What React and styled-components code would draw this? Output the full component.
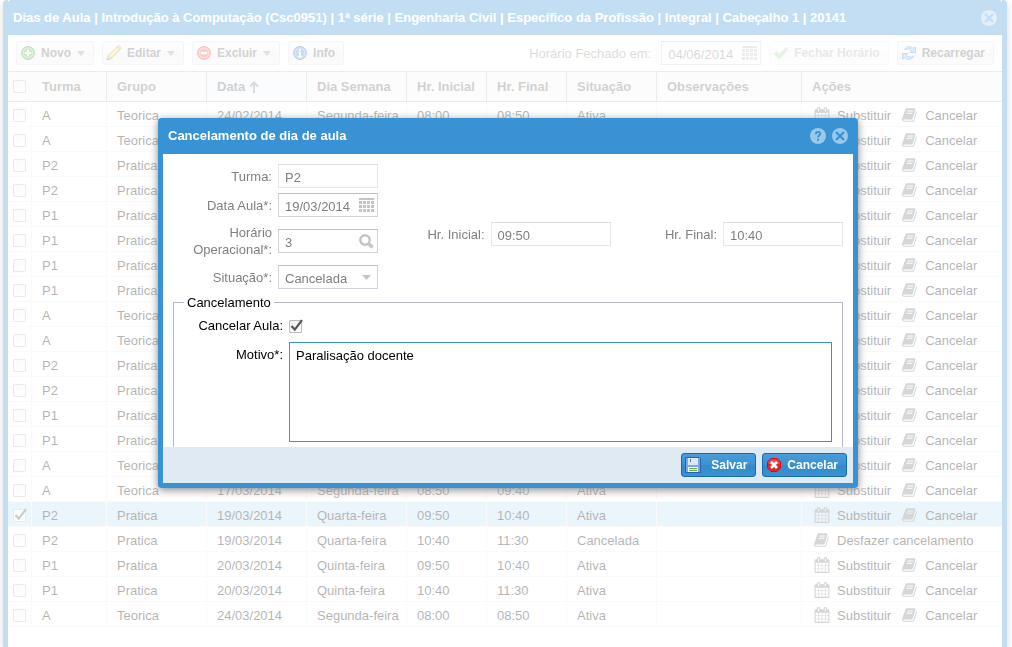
import React from 'react'
import styled, { createGlobalStyle, css } from 'styled-components'

const GlobalStyle = createGlobalStyle`
    * {
        box-sizing: border-box;
    }
    body {
        margin: 0;
        overflow: hidden;
        background: #fff;
        font-family: 'Liberation Sans', Arial, Helvetica, sans-serif;
        font-size: 13px;
        color: #000;
    }
    button, input, select, textarea {
        font-family: inherit;
        font-size: 13px;
    }
    svg {
        display: block;
        flex-shrink: 0;
    }
`

/* windows */

const Page = styled.div`
    padding: 0 5px 0 3px;
`

const MainWindow = styled.main`
    min-height: 100vh;
    border: 5px solid #3892d3;
    border-width: 0 5px;
    border-radius: 4px 4px 0 0;
    background: #fff;
    box-shadow: 0 2px 8px #888;
`

const WindowHeader = styled.header`
    display: flex;
    align-items: center;
    gap: 6px;
    height: ${(props) => (props.$tall ? 36 : 35)}px;
    padding: 0 5px;
    border-radius: 3px 3px 0 0;
    background: #3892d3;
`

const WindowTitle = styled.h1`
    flex: 1;
    margin: 0;
    font-size: 13px;
    line-height: 16px;
    color: #fff;
    white-space: nowrap;
`

const ToolButton = styled.button`
    width: 16px;
    height: 16px;
    padding: 0;
    border: 0;
    background: none;
    cursor: pointer;
`

const Mask = styled.div`
    position: fixed;
    inset: 0;
    display: flex;
    justify-content: center;
    align-items: flex-start;
    padding: 118px 0 0 4px;
    background: rgba(255, 255, 255, 0.7);
`

const Dialog = styled.section`
    width: 700px;
    max-width: 100%;
    border: 5px solid #3892d3;
    border-top: 0;
    border-radius: 4px;
    background: #3892d3;
    box-shadow: 0 2px 8px #888;
`

/* toolbar */

const Toolbar = styled.div`
    display: flex;
    align-items: center;
    gap: 8px;
    height: 36px;
    padding: 0 8px;
`

const Spacer = styled.span`
    flex: 1;
`

const buttonBase = css`
    display: flex;
    align-items: center;
    height: 24px;
    border-radius: 3px;
    font-size: 12px;
    font-weight: bold;
    white-space: nowrap;
    cursor: pointer;
`

const ToolbarButton = styled.button`
    ${buttonBase}
    gap: 5px;
    padding: 0 8px 0 3px;
    border: 1px solid #dcdcdc;
    background: linear-gradient(#f9f9f9, #f4f4f4 50%, #ececec 51%, #f2f2f2);
    color: #666;

    &:disabled {
        opacity: 0.5;
    }
`

const MenuArrow = styled.span`
    margin-left: 1px;
    border: 4px solid transparent;
    border-top: 5px solid #999;
    border-bottom: 0;
`

const ToolbarLabel = styled.label`
    margin-right: 2px;
    color: #888;
`

/* grid */

const Table = styled.table`
    width: 100%;
    table-layout: fixed;
    border-collapse: separate;
    border-spacing: 0;
`

const HeadCell = styled.th`
    height: 31px;
    padding: 0 10px;
    border-top: 1px solid #c0c0c0;
    border-bottom: 1px solid #c0c0c0;
    border-right: ${(props) => (props.$last ? 0 : '1px solid #c0c0c0')};
    background: ${(props) => (props.$sorted ? '#eef5fb' : '#f5f5f5')};
    color: #666;
    text-align: left;
    white-space: nowrap;
`

const CheckHeadCell = styled(HeadCell)`
    padding: 0 5px;
    border-right: 0;
`

const HeadContent = styled.span`
    display: flex;
    align-items: center;
    gap: 4px;
`

const Cell = styled.td`
    height: 25px;
    padding: 2px 10px 0;
    border-bottom: 1px solid #ededed;
    border-right: 1px solid #ededed;
    white-space: nowrap;
    overflow: hidden;
`

const CheckCell = styled(Cell)`
    padding: 2px 5px 0;
`

const ActionCell = styled(Cell)`
    padding: 2px 0 0 12px;
    border-right: 0;
`

const Row = styled.tr`
    background: ${(props) => (props.$selected ? '#bcdcf3' : '#fff')};
`

const Actions = styled.div`
    display: flex;
    align-items: center;
    gap: 11px;
`

const ActionLink = styled.a`
    display: flex;
    align-items: center;
    gap: 7px;
    color: #000;
    text-decoration: none;

    svg {
        color: #777;
    }
`

const CheckWrap = styled.span`
    position: relative;
    display: block;
    width: 13px;
    height: 13px;

    svg {
        position: absolute;
        left: 0;
        bottom: 0;
        pointer-events: none;
    }
`

const CheckInput = styled.input`
    appearance: none;
    display: block;
    width: 13px;
    height: 13px;
    margin: 0;
    border: 1px solid #bbb;
    border-radius: 1px;
    background: linear-gradient(135deg, #eee, #fff);
`

/* form */

const FormBody = styled.div`
    height: 293px;
    padding: 10px;
    background: #fff;
    overflow: hidden;
`

const FieldGrid = styled.div`
    display: grid;
    grid-template-columns: 205px 1fr 1fr;
    row-gap: 5px;
    margin-bottom: 5px;
`

const Field = styled.div`
    display: flex;
    align-items: ${(props) => (props.$top ? 'flex-start' : 'center')};
    grid-column-start: ${(props) => props.$column || 1};
    min-height: ${(props) => (props.$double ? 38 : 24)}px;
    gap: 6px;
`

const FieldLabel = styled.label`
    flex: 1;
    line-height: ${(props) => (props.$centered ? 26 : 17)}px;
    color: #7f7f7f;
    text-align: right;
`

const FieldBox = styled.span`
    position: relative;
    display: block;
    width: ${(props) => props.$width || 100}px;

    svg {
        position: absolute;
        top: 5px;
        right: 3px;
        pointer-events: none;
    }
`

const fieldStyle = css`
    display: block;
    width: 100%;
    height: 24px;
    margin: 0;
    padding: 2px 6px 0;
    border: 1px solid ${(props) => (props.$plain ? '#e7e7e7' : '#d4d4d4')};
    border-top-color: ${(props) => (props.$plain ? '#dfdfdf' : '#c0c0c0')};
    border-radius: 0;
    background: #fff;
    color: #7f7f7f;
    opacity: 1;
    outline: 0;
`

const TextInput = styled.input`
    ${fieldStyle}
`

const Select = styled.select`
    ${fieldStyle}
    appearance: none;
`

const Fieldset = styled.fieldset`
    height: 170px;
    margin: 0;
    padding: 2px 10px 10px;
    border: 1px solid #b5b8c8;
`

const Legend = styled.legend`
    padding: 0 3px;
    line-height: 17px;
`

const FieldsetRow = styled.div`
    display: flex;
    align-items: ${(props) => (props.$top ? 'flex-start' : 'center')};
    gap: 6px;
    margin-bottom: 3px;
`

const FieldsetLabel = styled.label`
    width: 99px;
    line-height: 26px;
    text-align: right;
`

const TextArea = styled.textarea`
    flex: 1;
    height: 100px;
    padding: 4px 6px;
    border: 1px solid #3892d3;
    line-height: 17px;
    color: #000;
    outline: 0;
    resize: none;
`

const DialogFooter = styled.footer`
    display: flex;
    justify-content: flex-end;
    gap: 6px;
    padding: 6px;
    background: #dfeaf2;
`

const PrimaryButton = styled.button`
    ${buttonBase}
    gap: ${(props) => props.$gap}px;
    padding: 0 8px 0 3px;
    border: 1px solid #126daf;
    background: linear-gradient(#4b9cd7, #3892d3 50%, #358ac8 51%, #3892d3);
    color: #fff;
`

/* icons */

const CircleIcon = ({ light, dark, children }) => (
    <svg width="16" height="16" viewBox="0 0 16 16">
        <circle cx="8" cy="8" r="6.5" fill={light} stroke={dark} />
        <circle cx="8" cy="8" r="5" fill="none" stroke="#fff" strokeOpacity="0.45" />
        {children}
    </svg>
)

const AddIcon = () => (
    <CircleIcon light="#5cb849" dark="#3a8f32">
        <path d="M8 4.8v6.4M4.8 8h6.4" stroke="#fff" strokeWidth="2" />
    </CircleIcon>
)

const DeleteIcon = () => (
    <CircleIcon light="#f0594c" dark="#d23a30">
        <path d="M4.8 8h6.4" stroke="#fff" strokeWidth="2.4" />
    </CircleIcon>
)

const InfoIcon = () => (
    <CircleIcon light="#4f86c6" dark="#2f5f9f">
        <path d="M8 4v2M6.5 7.5H8v4M6.3 11.5h3.4" stroke="#fff" strokeWidth="1.6" fill="none" />
    </CircleIcon>
)

const PencilIcon = () => (
    <svg width="16" height="16" viewBox="0 0 16 16">
        <path d="M1.2 14.8l1.3-4.2L11 2l3 3-8.5 8.5z" fill="#f7cf4c" stroke="#b8862c" strokeWidth="0.9" />
        <path d="M3.6 11.6l8.4-8.4" stroke="#fff1a8" strokeWidth="1.4" />
        <path d="M10.8 2.1L12.2.8q.6-.4 1.2 0l1.8 1.8q.4.6 0 1.2L13.8 5.2z" fill="#f3b3a0" stroke="#b87a5c" strokeWidth="0.7" />
        <path d="M1.2 14.8l1.3-4.2 2.9 2.9z" fill="#ecd2a4" stroke="#9c7340" strokeWidth="0.6" />
        <path d="M1.2 14.8l.6-1.8 1.2 1.2z" fill="#333" />
    </svg>
)

const TickIcon = () => (
    <svg width="16" height="16" viewBox="0 0 16 16">
        <path d="M1 9l2.6-2.3 2.7 2.7L13 2.5l2 2.1-8.7 9.4z" fill="#5cad4a" stroke="#3f8c35" strokeWidth="0.6" />
    </svg>
)

const RefreshIcon = () => (
    <svg width="16" height="16" viewBox="0 0 16 16">
        <g fill="#8cc4f2" stroke="#2f7ac6" strokeWidth="0.8" strokeLinejoin="round">
            <path d="M3.5 4.5C5.500 1 10 .8 12.300 3.300L14.500 2v5.500H9l1.800-1.800C9.500 4.200 7.200 3.500 3.500 4.500z" />
            <path d="M12.500 11.500C10.500 15 6 15.200 3.700 12.700L1.500 14V8.500H7l-1.800 1.800c1.300 1.500 3.600 2.200 7.300 1.200z" />
        </g>
    </svg>
)

const CalendarIcon = () => (
    <svg width="16" height="16" viewBox="0 0 1792 1792" fill="currentColor">
        <path d="M192 1664h288v-288h-288v288zm352 0h320v-288h-320v288zm-352-352h288v-320h-288v320zm352 0h320v-320h-320v320zm-352-384h288v-288h-288v288zm736 736h320v-288h-320v288zm-384-736h320v-288h-320v288zm768 736h288v-288h-288v288zm-384-352h320v-320h-320v320zm-352-864v-288q0-13-9.5-22.5t-22.5-9.5h-64q-13 0-22.5 9.5t-9.5 22.5v288q0 13 9.5 22.5t22.5 9.5h64q13 0 22.5-9.5t9.5-22.5zm736 864h288v-320h-288v320zm-384-384h320v-288h-320v288zm384 0h288v-288h-288v288zm32-480v-288q0-13-9.5-22.5t-22.5-9.5h-64q-13 0-22.5 9.5t-9.5 22.5v288q0 13 9.5 22.5t22.5 9.5h64q13 0 22.5-9.5t9.5-22.5zm384-64v1280q0 52-38 90t-90 38h-1408q-52 0-90-38t-38-90v-1280q0-52 38-90t90-38h128v-96q0-66 47-113t113-47h64q66 0 113 47t47 113v96h384v-96q0-66 47-113t113-47h64q66 0 113 47t47 113v96h128q52 0 90 38t38 90z" />
    </svg>
)

const BookIcon = () => (
    <svg width="16" height="16" viewBox="0 0 1792 1792" fill="currentColor">
        <path d="M1639 478q40 57 18 129l-275 906q-19 64-76.5 107.5t-122.5 43.5h-923q-77 0-148.5-53.5t-99.5-131.5q-24-67-2-127 0-4 3-27t4-37q1-8-3-21.5t-3-19.5q2-11 8-21t16.5-23.5 16.5-23.5q23-38 45-91.5t30-91.5q3-10 .5-30t-.5-28q3-11 17-28t17-23q21-36 42-92t25-90q1-9-2.5-32t.5-28q4-13 22-30.5t22-22.5q19-26 42.5-84.5t27.5-96.5q1-8-3-25.5t-2-26.5q2-8 9-18t18-23 17-21q8-12 16.5-30.5t15-35 16-36 19.5-32 26.5-23.5 36-11.5 47.5 5.5l-1 3q38-9 51-9h761q74 0 114 56t18 130l-274 906q-36 119-71.5 153.5t-128.5 34.5h-869q-27 0-38 15-11 16-1 43 24 70 144 70h923q29 0 56-15.5t35-41.5l300-987q7-22 5-57 38 15 59 43zm-1064 2q-4 13 2 22.5t20 9.5h608q13 0 25.5-9.5t16.5-22.5l21-64q4-13-2-22.5t-20-9.5h-608q-13 0-25.5 9.5t-16.5 22.5zm-83 256q-4 13 2 22.5t20 9.5h608q13 0 25.5-9.5t16.5-22.5l21-64q4-13-2-22.5t-20-9.5h-608q-13 0-25.5 9.5t-16.5 22.5z" />
    </svg>
)

const SortIcon = () => (
    <svg width="10" height="12" viewBox="0 0 10 12">
        <path d="M5 12V1.5M1 5.5l4-4 4 4" stroke="#888" strokeWidth="2" fill="none" />
    </svg>
)

const CheckMark = () => (
    <svg width="15" height="15" viewBox="0 0 15 15">
        <path d="M2.5 8l3.3 3.6L13 2.2" stroke="#555" strokeWidth="2.2" fill="none" />
    </svg>
)

const DateTriggerIcon = () => (
    <svg width="16" height="16" viewBox="0 0 16 16" fill="#c4c4c4" shapeRendering="crispEdges">
        <rect width="15" height="2" />
        {[3, 7, 11].map((y) =>
            [0, 4, 8, 12].map((x) => <rect key={`${x}-${y}`} x={x} y={y} width="3" height="3" />)
        )}
    </svg>
)

const SearchTriggerIcon = () => (
    <svg width="16" height="16" viewBox="0 0 16 16">
        <circle cx="6" cy="6" r="4.7" stroke="#c4c4c4" strokeWidth="2.4" fill="none" />
        <path d="M9.5 9.5l4 4" stroke="#c4c4c4" strokeWidth="3.4" />
    </svg>
)

const SelectTriggerIcon = () => (
    <svg width="16" height="16" viewBox="0 0 16 16">
        <path d="M3 5h9L7.500 10z" fill="#c4c4c4" />
    </svg>
)

const CloseIcon = () => (
    <svg width="16" height="16" viewBox="0 0 16 16">
        <circle cx="8" cy="8" r="8" fill="#9bc8e9" />
        <path d="M4 4l8 8M12 4l-8 8" stroke="#3892d3" strokeWidth="2.2" />
    </svg>
)

const HelpIcon = () => (
    <svg width="16" height="16" viewBox="0 0 16 16">
        <circle cx="8" cy="8" r="8" fill="#9bc8e9" />
        <path d="M5.8 6.3C5.8 3 10.3 3.3 10.2 5.8 10.2 7.3 8 7.4 8 9.6" stroke="#3892d3" strokeWidth="1.9" fill="none" />
        <rect x="7" y="10.8" width="2" height="2" fill="#3892d3" />
    </svg>
)

const SaveIcon = () => (
    <svg width="16" height="16" viewBox="0 0 16 16">
        <path d="M.5.5h14l1 1v14H.5z" fill="#7ba6e6" stroke="#2f5fae" />
        <rect x="3" y="1" width="10" height="7" fill="#dce8fa" />
        <rect x="5" y="2" width="1" height="3" fill="#4b74bb" />
        <rect x="3" y="10" width="10" height="5" fill="#f4f8f2" />
        <path d="M4 11.5h8M4 13.5h8" stroke="#6cb04a" />
    </svg>
)

const CancelIcon = () => (
    <svg width="16" height="16" viewBox="0 0 16 16">
        <path d="M5 1.5h6L14.500 5v6L11 14.500H5L1.500 11V5z" fill="#e8232b" stroke="#e3060f" />
        <path d="M5.200 2.500h5.600L13.500 5.200V7h-11V5.200z" fill="#f4686c" fillOpacity="0.6" />
        <path d="M5 5l6 6M11 5l-6 6" stroke="#fff" strokeWidth="2.6" />
    </svg>
)

/* data */

const columns = [
    { name: 'Turma', width: 75 },
    { name: 'Grupo', width: 100 },
    { name: 'Data', width: 100, sorted: true },
    { name: 'Dia Semana', width: 100 },
    { name: 'Hr. Inicial', width: 80 },
    { name: 'Hr. Final', width: 80 },
    { name: 'Situação', width: 90 },
    { name: 'Observações', width: 145 },
    { name: 'Ações' },
]

const lessons = [
    ['A', '24/02/2014', 'Segunda-feira', '08:00', '08:50'],
    ['A', '24/02/2014', 'Segunda-feira', '08:50', '09:40'],
    ['P2', '26/02/2014', 'Quarta-feira', '09:50', '10:40'],
    ['P2', '26/02/2014', 'Quarta-feira', '10:40', '11:30'],
    ['P1', '27/02/2014', 'Quinta-feira', '09:50', '10:40'],
    ['P1', '27/02/2014', 'Quinta-feira', '10:40', '11:30'],
    ['P1', '06/03/2014', 'Quinta-feira', '09:50', '10:40'],
    ['P1', '06/03/2014', 'Quinta-feira', '10:40', '11:30'],
    ['A', '10/03/2014', 'Segunda-feira', '08:00', '08:50'],
    ['A', '10/03/2014', 'Segunda-feira', '08:50', '09:40'],
    ['P2', '12/03/2014', 'Quarta-feira', '09:50', '10:40'],
    ['P2', '12/03/2014', 'Quarta-feira', '10:40', '11:30'],
    ['P1', '13/03/2014', 'Quinta-feira', '09:50', '10:40'],
    ['P1', '13/03/2014', 'Quinta-feira', '10:40', '11:30'],
    ['A', '17/03/2014', 'Segunda-feira', '08:00', '08:50'],
    ['A', '17/03/2014', 'Segunda-feira', '08:50', '09:40'],
    ['P2', '19/03/2014', 'Quarta-feira', '09:50', '10:40'],
    ['P2', '19/03/2014', 'Quarta-feira', '10:40', '11:30', 'Cancelada'],
    ['P1', '20/03/2014', 'Quinta-feira', '09:50', '10:40'],
    ['P1', '20/03/2014', 'Quinta-feira', '10:40', '11:30'],
    ['A', '24/03/2014', 'Segunda-feira', '08:00', '08:50'],
]

const SELECTED = 16

const Checkbox = ({ checked, ...rest }) => (
    <CheckWrap>
        <CheckInput type="checkbox" checked={checked} readOnly {...rest} />
        {checked && <CheckMark />}
    </CheckWrap>
)

const LessonRow = ({ lesson, selected }) => {
    const [turma, data, dia, inicio, fim, situacao = 'Ativa'] = lesson
    return (
        <Row $selected={selected}>
            <CheckCell>
                <Checkbox checked={selected} aria-label="Selecionar" />
            </CheckCell>
            <Cell>{turma}</Cell>
            <Cell>{turma === 'A' ? 'Teorica' : 'Pratica'}</Cell>
            <Cell>{data}</Cell>
            <Cell>{dia}</Cell>
            <Cell>{inicio}</Cell>
            <Cell>{fim}</Cell>
            <Cell>{situacao}</Cell>
            <Cell />
            <ActionCell>
                {situacao === 'Cancelada' ? (
                    <Actions>
                        <ActionLink href="#desfazer">
                            <BookIcon />
                            Desfazer cancelamento
                        </ActionLink>
                    </Actions>
                ) : (
                    <Actions>
                        <ActionLink href="#substituir">
                            <CalendarIcon />
                            Substituir
                        </ActionLink>
                        <ActionLink href="#cancelar">
                            <BookIcon />
                            Cancelar
                        </ActionLink>
                    </Actions>
                )}
            </ActionCell>
        </Row>
    )
}

const LessonTable = () => (
    <Table>
        <colgroup>
            <col width="24" />
            {columns.map((column) => (
                <col key={column.name} width={column.width} />
            ))}
        </colgroup>
        <thead>
            <tr>
                <CheckHeadCell>
                    <Checkbox checked={false} aria-label="Selecionar todos" />
                </CheckHeadCell>
                {columns.map((column) => (
                    <HeadCell key={column.name} $sorted={column.sorted} $last={!column.width}>
                        <HeadContent>
                            {column.name}
                            {column.sorted && <SortIcon />}
                        </HeadContent>
                    </HeadCell>
                ))}
            </tr>
        </thead>
        <tbody>
            {lessons.map((lesson, index) => (
                <LessonRow key={index} lesson={lesson} selected={index === SELECTED} />
            ))}
        </tbody>
    </Table>
)

const MainToolbar = () => (
    <Toolbar>
        <ToolbarButton><AddIcon />Novo<MenuArrow /></ToolbarButton>
        <ToolbarButton><PencilIcon />Editar<MenuArrow /></ToolbarButton>
        <ToolbarButton><DeleteIcon />Excluir<MenuArrow /></ToolbarButton>
        <ToolbarButton><InfoIcon />Info</ToolbarButton>
        <Spacer />
        <ToolbarLabel htmlFor="fechado">Horário Fechado em:</ToolbarLabel>
        <FieldBox>
            <TextInput id="fechado" defaultValue="04/06/2014" disabled />
            <DateTriggerIcon />
        </FieldBox>
        <ToolbarButton disabled><TickIcon />Fechar Horário</ToolbarButton>
        <ToolbarButton><RefreshIcon />Recarregar</ToolbarButton>
    </Toolbar>
)

const CancelDialog = () => (
    <Dialog role="dialog" aria-labelledby="dialog-title">
        <WindowHeader $tall>
            <WindowTitle as="h2" id="dialog-title">Cancelamento de dia de aula</WindowTitle>
            <ToolButton aria-label="Ajuda"><HelpIcon /></ToolButton>
            <ToolButton aria-label="Fechar"><CloseIcon /></ToolButton>
        </WindowHeader>
        <FormBody>
            <FieldGrid>
                <Field>
                    <FieldLabel htmlFor="turma">Turma:</FieldLabel>
                    <FieldBox>
                        <TextInput id="turma" defaultValue="P2" disabled $plain />
                    </FieldBox>
                </Field>
                <Field>
                    <FieldLabel htmlFor="data">Data Aula*:</FieldLabel>
                    <FieldBox>
                        <TextInput id="data" defaultValue="19/03/2014" disabled />
                        <DateTriggerIcon />
                    </FieldBox>
                </Field>
                <Field $double>
                    <FieldLabel htmlFor="horario">Horário Operacional*:</FieldLabel>
                    <FieldBox>
                        <TextInput id="horario" defaultValue="3" disabled />
                        <SearchTriggerIcon />
                    </FieldBox>
                </Field>
                <Field $top $column={2}>
                    <FieldLabel htmlFor="inicial" $centered>Hr. Inicial:</FieldLabel>
                    <FieldBox $width={120}>
                        <TextInput id="inicial" defaultValue="09:50" disabled $plain />
                    </FieldBox>
                </Field>
                <Field $top $column={3}>
                    <FieldLabel htmlFor="final" $centered>Hr. Final:</FieldLabel>
                    <FieldBox $width={120}>
                        <TextInput id="final" defaultValue="10:40" disabled $plain />
                    </FieldBox>
                </Field>
                <Field>
                    <FieldLabel htmlFor="situacao">Situação*:</FieldLabel>
                    <FieldBox>
                        <Select id="situacao" disabled>
                            <option>Cancelada</option>
                        </Select>
                        <SelectTriggerIcon />
                    </FieldBox>
                </Field>
            </FieldGrid>
            <Fieldset>
                <Legend>Cancelamento</Legend>
                <FieldsetRow>
                    <FieldsetLabel htmlFor="cancelar">Cancelar Aula:</FieldsetLabel>
                    <Checkbox id="cancelar" checked />
                </FieldsetRow>
                <FieldsetRow $top>
                    <FieldsetLabel htmlFor="motivo">Motivo*:</FieldsetLabel>
                    <TextArea id="motivo" defaultValue="Paralisação docente" />
                </FieldsetRow>
            </Fieldset>
        </FormBody>
        <DialogFooter>
            <PrimaryButton $gap={10}><SaveIcon />Salvar</PrimaryButton>
            <PrimaryButton $gap={5}><CancelIcon />Cancelar</PrimaryButton>
        </DialogFooter>
    </Dialog>
)

const App = () => {
    return (
        <Page>
            <GlobalStyle />
            <MainWindow>
                <WindowHeader>
                    <WindowTitle>
                        Dias de Aula | Introdução à Computação (Csc0951) | 1ª série | Engenharia Civil | Específico da
                        Profissão | Integral | Cabeçalho 1 | 20141
                    </WindowTitle>
                    <ToolButton aria-label="Fechar janela"><CloseIcon /></ToolButton>
                </WindowHeader>
                <MainToolbar />
                <LessonTable />
            </MainWindow>
            <Mask>
                <CancelDialog />
            </Mask>
        </Page>
    )
}

export default App
